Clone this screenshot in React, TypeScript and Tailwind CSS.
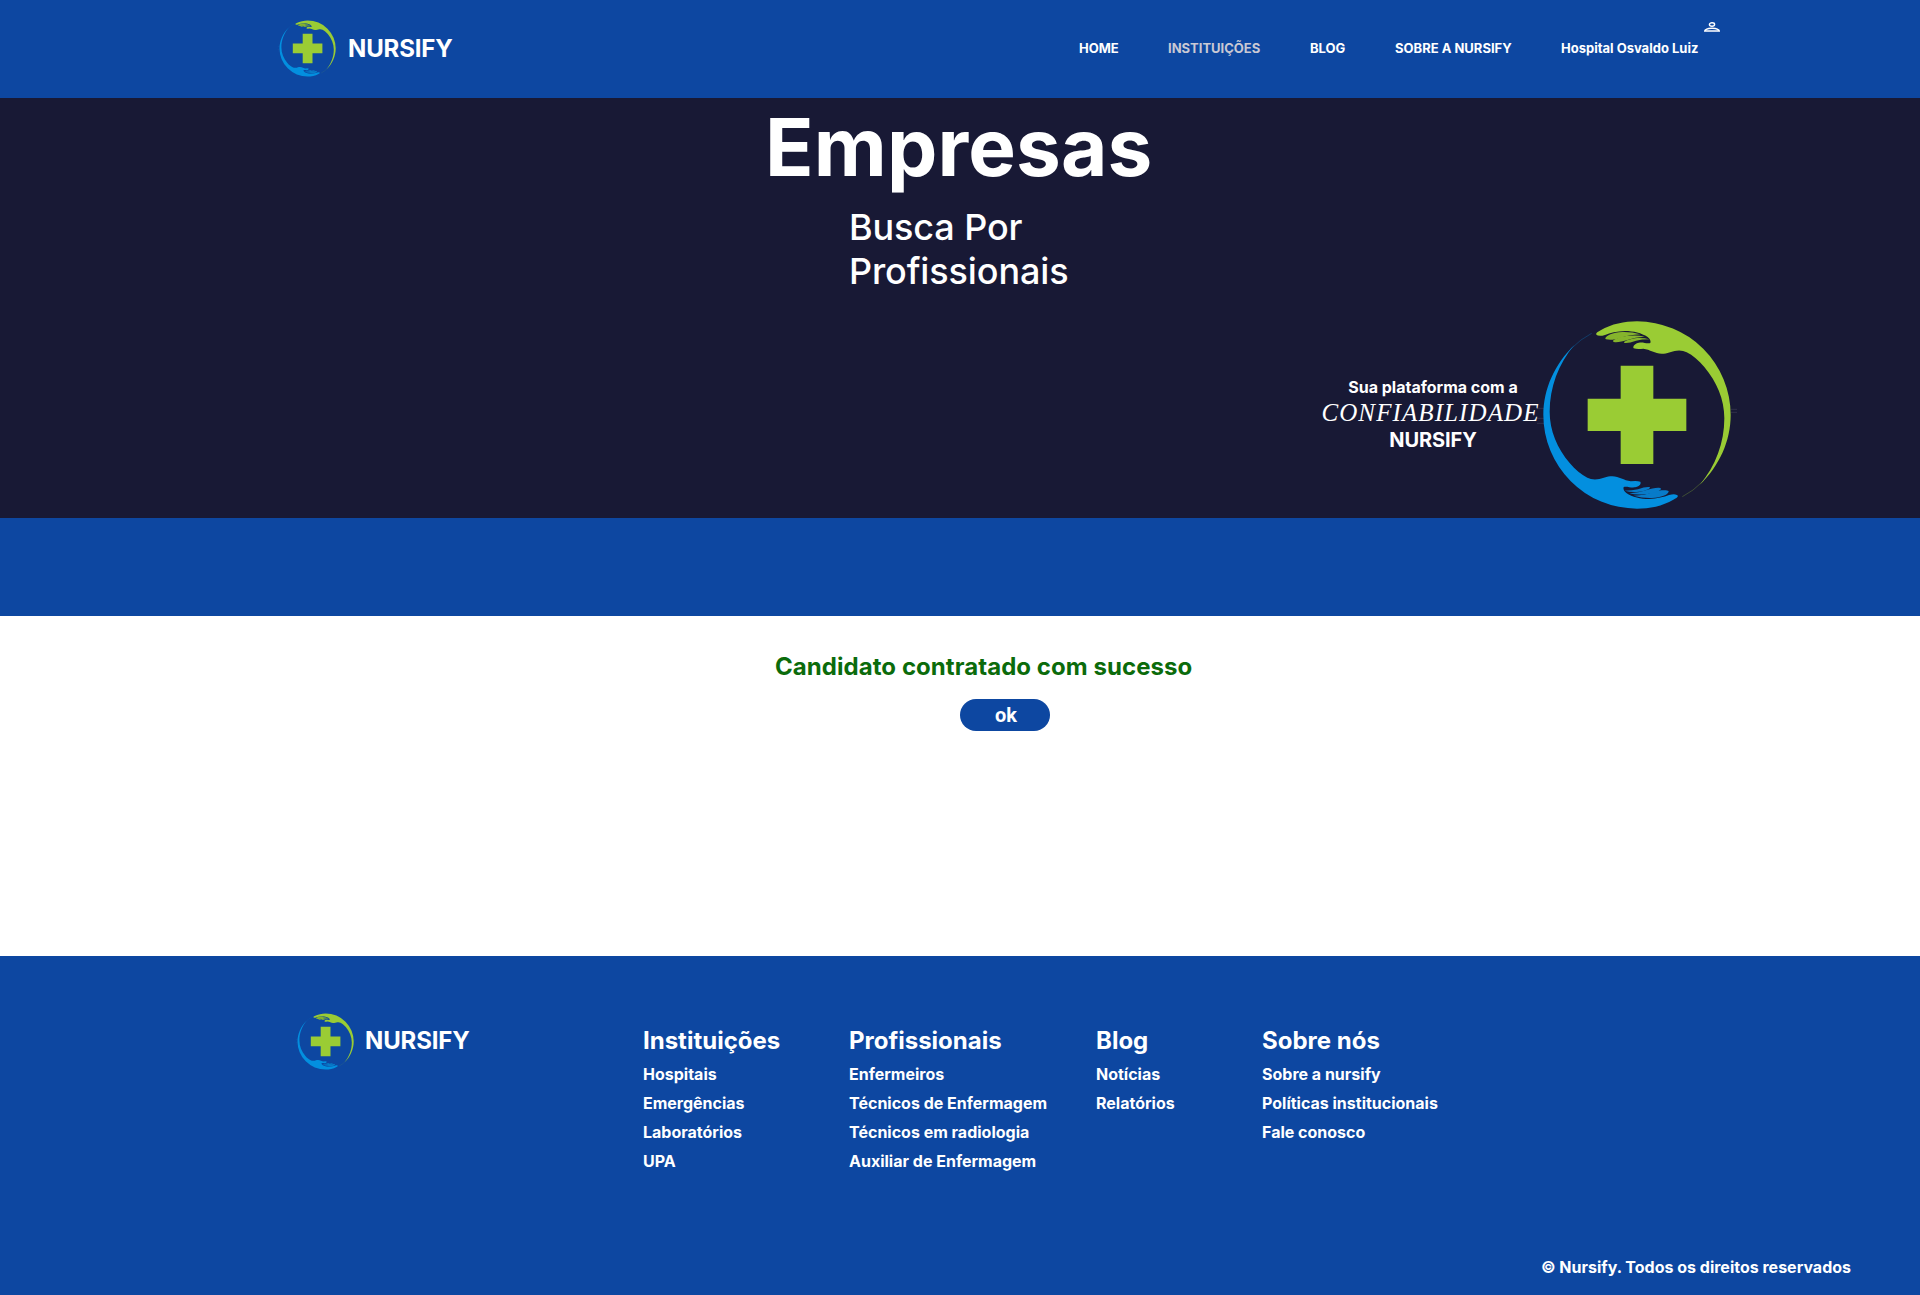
function Hand({ fill, shade }: { fill: string; shade: string }) {
  return (
    <g>
      <path
        fill={fill}
        d="M183 73C184 68 190 65 197 61C230 42 268 34 306 34A281 281 0 0 1 587 315C587 393 553 468 494 525C542 468 568 398 568 325C568 268 545 215 508 171C491 151 473 136 455 127Q442 120 425 122C408 124 398 131 380 131C360 131 345 118 325 116Q307 119 296 115C292 108 301 100 312 98C325 96 336 102 346 99Q349 90 338 81C320 69 295 63 270 63C245 64 225 69 210 75Q190 81 183 73Z"
      />
      <path stroke={fill} strokeOpacity="0.35" strokeWidth="2.5" d="M506 512Q474 544 442 560" />
      <path fill={shade} d="M211 85C214 76 232 68 262 66Q290 65 316 73Q280 75 256 84C240 89 226 91 213 88Q210 87 211 85Z" />
      <path fill={shade} d="M234 93C236 87 256 79 285 77Q310 75 329 80Q300 82 280 89C262 94 247 98 237 96Q233 95 234 93Z" />
      <path fill={shade} d="M267 97C271 91 288 86 307 84Q327 83 343 88Q320 88 303 92Q282 100 270 99Q266 99 267 97Z" />
    </g>
  );
}

function Logo({ className }: { className: string }) {
  return (
    <svg viewBox="0 0 630 630" className={className} fill="none">
      <path stroke="#fff" strokeOpacity="0.1" strokeWidth="3" d="M6 295H28M6 325H28M6 340H30M587 298H606M587 307H606" />
      <Hand fill="#9acc34" shade="#85b42c" />
      <g transform="rotate(180 306 315)">
        <Hand fill="#038fdf" shade="#087bc9" />
      </g>
      <path fill="#9acc34" d="M257 167H355V266H454V363H355V462H257V363H158V266H257Z" />
    </svg>
  );
}

const columns = [
  { title: "Instituições", links: ["Hospitais", "Emergências", "Laboratórios", "UPA"], width: "w-[206px]" },
  { title: "Profissionais", links: ["Enfermeiros", "Técnicos de Enfermagem", "Técnicos em radiologia", "Auxiliar de Enfermagem"], width: "w-[247px]" },
  { title: "Blog", links: ["Notícias", "Relatórios"], width: "w-[166px]" },
  { title: "Sobre nós", links: ["Sobre a nursify", "Políticas institucionais", "Fale conosco"], width: "w-[200px]" },
];

export default function App() {
  return (
    <div className="flex h-[1295px] w-[1920px] flex-col overflow-hidden bg-white font-['Inter',sans-serif] font-bold text-white">
      <header className="flex h-[98px] shrink-0 items-center bg-[#0d47a1] pl-[277px]">
        <Logo className="mb-px size-[63px]" />
        <span className="ml-[8px] w-[731px] text-2xl tracking-[-0.15px]">NURSIFY</span>
        <nav className="flex items-center whitespace-nowrap text-[13px]">
          <a className="w-[89px]">HOME</a>
          <a className="w-[142px] text-[#c9c9d4]">INSTITUIÇÕES</a>
          <a className="w-[85px]">BLOG</a>
          <a className="w-[166px]">SOBRE A NURSIFY</a>
          <a className="w-[143px]">Hospital Osvaldo Luiz</a>
        </nav>
        <svg viewBox="0 0 16 10" className="mb-[45px] h-[10px] w-4" fill="none" stroke="white" strokeWidth="1.4">
          <ellipse cx="8" cy="2.5" rx="2.6" ry="1.7" />
          <path d="M2.2 7.4C5 5.8 11 5.8 13.8 7.4Q15.3 8 15.3 9H0.7Q0.7 8 2.2 7.4Z" />
        </svg>
      </header>

      <section className="flex h-[420px] shrink-0 flex-col bg-[#181935]">
        <h1 className="ml-[765px] text-[80px] leading-[97px] tracking-[0.15px]">Empresas</h1>
        <p className="ml-[849px] mt-[10px] w-[240px] text-[36px] font-medium leading-[44px] tracking-[-0.12px]">Busca Por Profissionais</p>
        <div className="ml-[1321px] mt-[17px] flex">
          <div className="flex w-[224px] flex-col items-center pt-[65px]">
            <span className="text-base leading-[24px]">Sua plataforma com a</span>
            <span className="mr-[5px] whitespace-nowrap font-['Liberation_Serif',serif] text-[25px] font-normal italic leading-[28px] tracking-[1.1px]">CONFIABILIDADE</span>
            <span className="text-xl leading-[27px] tracking-[-0.1px]">NURSIFY</span>
          </div>
          <Logo className="-ml-[10px] size-[210px]" />
        </div>
      </section>

      <div className="h-[98px] shrink-0 bg-[#0d47a1]" />

      <main className="flex h-[340px] shrink-0 flex-col">
        <h2 className="ml-[775px] mt-[36px] text-2xl leading-[29px] tracking-[0.06px] text-[#0b6b0b]">Candidato contratado com sucesso</h2>
        <button className="ml-[960px] mt-[18px] h-8 w-[90px] rounded-full bg-[#0d47a1] pl-[2px] font-['Roboto',sans-serif] text-xl font-bold leading-8">ok</button>
      </main>

      <footer className="flex h-[339px] shrink-0 flex-col justify-between bg-[#0d47a1]">
        <div className="flex pl-[295px] pt-[54px]">
          <Logo className="size-[63px]" />
          <span className="ml-[7px] mt-[16px] w-[278px] text-2xl leading-[29px] tracking-[-0.15px]">NURSIFY</span>
          {columns.map((c) => (
            <div key={c.title} className={"mt-[16px] whitespace-nowrap " + c.width}>
              <h3 className="mb-[5px] text-2xl leading-[29px]">{c.title}</h3>
              {c.links.map((l) => (
                <a key={l} className="block text-base leading-[29px]">{l}</a>
              ))}
            </div>
          ))}
        </div>
        <p className="mb-[18px] mr-[69px] text-right text-base leading-[20px]">© Nursify. Todos os direitos reservados</p>
      </footer>
    </div>
  );
}
